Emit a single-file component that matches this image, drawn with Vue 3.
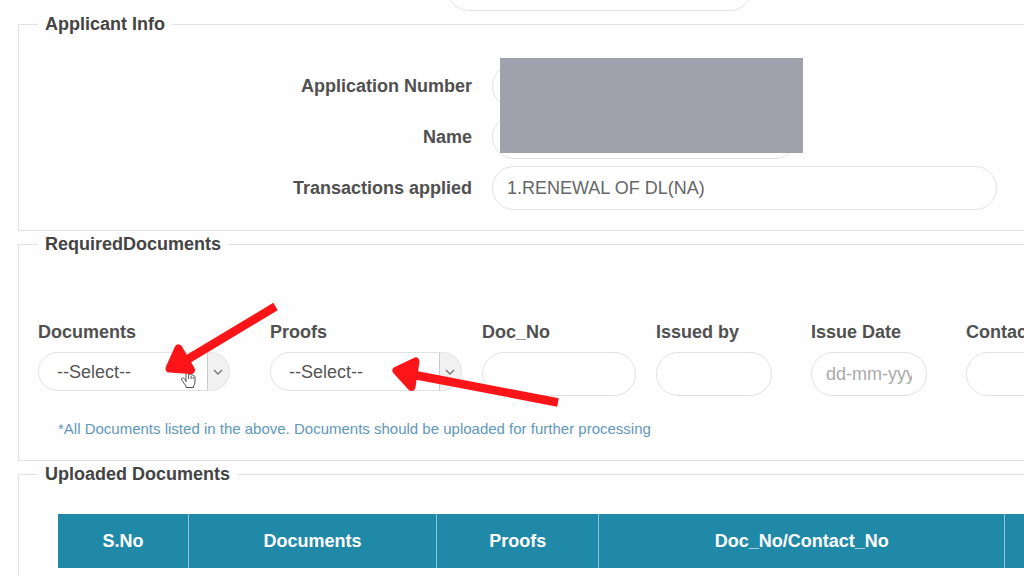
<template>
  <div class="page">
    <div class="top-row">
      <input class="box medium" type="text" aria-label="Search" />
    </div>

    <fieldset class="applicant">
      <legend>Applicant Info</legend>
      <div class="info">
        <label for="appNo">Application Number</label>
        <input id="appNo" class="box medium" type="text" readonly />
        <label for="name">Name</label>
        <input id="name" class="box medium" type="text" readonly />
        <label for="trans">Transactions applied</label>
        <input id="trans" v-model="transaction" class="box large" type="text" readonly />
      </div>
    </fieldset>

    <fieldset class="required">
      <legend>RequiredDocuments</legend>
      <div class="fields">
        <div v-for="f in fields" :key="f.id" class="field">
          <label :for="f.id">{{ f.label }}</label>
          <div v-if="f.type === 'select'" class="select">
            <select :id="f.id">
              <option>--Select--</option>
            </select>
            <svg width="10" height="6" viewBox="0 0 10 6">
              <path d="M1 1l4 4 4-4" fill="none" stroke="#777" stroke-width="1.4" />
            </svg>
          </div>
          <input v-else :id="f.id" class="box" :class="f.size" type="text" :placeholder="f.hint" />
        </div>
      </div>
      <p class="note">
        *All Documents listed in the above. Documents should be uploaded for further processing
      </p>
    </fieldset>

    <fieldset class="uploaded">
      <legend>Uploaded Documents</legend>
      <table>
        <colgroup>
          <col v-for="c in columns" :key="c.title" :style="{ width: c.width }" />
        </colgroup>
        <thead>
          <tr>
            <th v-for="c in columns" :key="c.title" scope="col">{{ c.title }}</th>
          </tr>
        </thead>
      </table>
    </fieldset>

    <div class="mask"></div>
    <svg class="marks" width="1024" height="576" viewBox="0 0 1024 576">
      <path
        d="M186 382v-12.500q0-1.500 1.300-1.500t1.300 1.500v5q2-1 2.500 .5q2-.8 2.200 .7q1.700-.3 1.700 1.300v5q0 2.500-1.500 4v1.500h-7.500v-1.500l-4-5.500q-1.200-1.800 .2-2.500t2.500 1.200l1.300 1.800"
        fill="#fff"
        stroke="#555"
        stroke-width="1"
        stroke-linejoin="round"
      />
      <path d="M188.600 375v4M191.100 376v3M193.200 377v2" stroke="#555" stroke-width="1" />
      <g fill="#fb1418" stroke="#fb1418">
        <path d="M275.500 306.500L184 361.500" stroke-width="8.500" />
        <path d="M169.500 368.500L178.500 348.500L191 370z" stroke-width="8" stroke-linejoin="round" />
        <path d="M558 402.500L412 374.500" stroke-width="8.500" />
        <path d="M396.500 370.500L415.500 361.500L411.500 387z" stroke-width="8" stroke-linejoin="round" />
      </g>
    </svg>
  </div>
</template>

<script setup>
import { ref } from 'vue'

const transaction = ref('1.RENEWAL OF DL(NA)')

const fields = [
  { id: 'documents', label: 'Documents', type: 'select' },
  { id: 'proofs', label: 'Proofs', type: 'select' },
  { id: 'docNo', label: 'Doc_No', size: 'full' },
  { id: 'issuedBy', label: 'Issued by', size: 'small' },
  { id: 'issueDate', label: 'Issue Date', size: 'small', hint: 'dd-mm-yyyy' },
  { id: 'contactNo', label: 'Contact_No', size: 'small' }
]

const columns = [
  { title: 'S.No', width: '13.5%' },
  { title: 'Documents', width: '25.7%' },
  { title: 'Proofs', width: '16.8%' },
  { title: 'Doc_No/Contact_No', width: '42%' },
  { title: '', width: '2%' }
]
</script>

<style>
body {
  margin: 0;
  background: #fefefe;
}
</style>

<style scoped>
.page {
  position: relative;
  display: flex;
  flex-direction: column;
  min-height: 100vh;
  overflow: hidden;
  font-family: 'Liberation Sans', Arial, sans-serif;
  font-size: 18px;
  color: #505050;
}
.top-row {
  display: flex;
  align-items: flex-end;
  height: 11px;
  padding-left: 447px;
}
fieldset {
  box-sizing: border-box;
  min-width: 0;
  margin: 1px 0 0 18px;
  padding: 0 0 0 19px;
  border: 1px solid #e2e2e2;
  border-right: none;
}
legend {
  padding: 0 7px;
  line-height: 24px;
  font-weight: bold;
  color: #444;
}
label {
  font-weight: bold;
  white-space: nowrap;
}
.box {
  box-sizing: border-box;
  height: 44px;
  padding: 0 14px;
  border: 1px solid #e2e2e2;
  border-radius: 22px;
  background: #fff;
  font: inherit;
  color: #666;
}
.box::placeholder {
  color: #aaa;
}
.medium {
  width: 305px;
}
.large {
  width: 95%;
}
.full {
  width: 100%;
}
.small {
  width: 116px;
}
.info {
  display: grid;
  grid-template-columns: 434fr 532fr;
  gap: 7px 20px;
  align-items: center;
  padding: 28px 0 20px;
}
.info label {
  text-align: right;
}
.fields {
  display: grid;
  grid-template-columns: 212fr 192fr 154fr 135fr 135fr 58fr;
  column-gap: 20px;
  padding-top: 64px;
}
.field {
  min-width: 0;
}
.field label {
  display: block;
  line-height: 24px;
  margin-bottom: 8px;
}
.select {
  position: relative;
  max-width: 192px;
}
.select select {
  box-sizing: border-box;
  width: 100%;
  height: 39px;
  padding: 0 18px;
  border: 1px solid #e2e2e2;
  border-radius: 20px;
  appearance: none;
  background: linear-gradient(to left, #f1f1f1 21px, #ccc 21px, #ccc 22px, #fff 22px);
  font: inherit;
  color: #555;
}
.select svg {
  position: absolute;
  right: 7px;
  top: 17px;
  pointer-events: none;
}
.note {
  margin: 0;
  padding: 21px 0 19px 20px;
  font-size: 15px;
  line-height: 24px;
  color: #6199b8;
}
.uploaded {
  flex: 1;
  border-bottom: none;
}
table {
  width: calc(100% - 20px);
  margin: 28px 0 0 20px;
  table-layout: fixed;
  border-collapse: collapse;
}
th {
  height: 54px;
  padding: 0;
  border-right: 1px solid #8fc4d4;
  background: #2189a8;
  color: #fff;
}
th:last-child {
  border-right: none;
}
/* hides the applicant's private details */
.mask {
  position: absolute;
  left: 500px;
  top: 58px;
  width: 303px;
  height: 95px;
  background: #a1a1ad;
}
.marks {
  position: absolute;
  left: 0;
  top: 0;
  pointer-events: none;
}
</style>
